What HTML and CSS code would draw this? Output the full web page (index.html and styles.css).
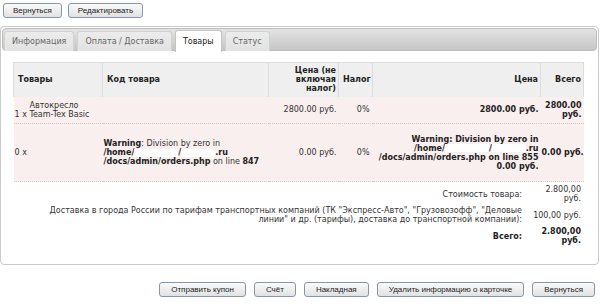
FILE: index.html
```html
<html>
<head>
  <title>Заказ</title>
  <link rel="stylesheet" href="styles.css">
</head>
<body>
<div class="topbar">
  <button class="btn">Вернуться</button>
  <button class="btn">Редактировать</button>
</div>

<div class="panel">
  <ul class="tabs">
    <li class="tab">Информация</li>
    <li class="tab">Оплата / Доставка</li>
    <li class="tab active">Товары</li>
    <li class="tab">Статус</li>
  </ul>

  <div class="content">
    <table class="items">
      <colgroup>
        <col class="w-name"><col class="w-code"><col class="w-net"><col class="w-tax"><col class="w-price"><col class="w-total">
      </colgroup>
      <thead>
        <tr>
          <th>Товары</th>
          <th>Код товара</th>
          <th class="num">Цена (не включая налог)</th>
          <th>Налог</th>
          <th class="num">Цена</th>
          <th class="num">Всего</th>
        </tr>
      </thead>
      <tbody>
        <tr class="row-short">
          <td class="prod"><div class="prod-title">Автокресло</div>1 x Team-Tex Basic</td>
          <td></td>
          <td class="num">2800.00 руб.</td>
          <td class="num tax">0%</td>
          <td class="num"><b>2800.00 руб.</b></td>
          <td class="num"><b>2800.00 руб.</b></td>
        </tr>
        <tr class="row-tall">
          <td>0 x</td>
          <td class="warn"><b>Warning</b>: Division by zero in<br><b class="nw">/home/<span class="mask m1"></span>/<span class="mask m2"></span>.ru</b><br><b>/docs/admin/orders.php</b> on line <b>847</b></td>
          <td class="num">0.00 руб.</td>
          <td class="num tax">0%</td>
          <td class="num warn"><b>Warning: Division by zero in<br><span class="nw">/home/<span class="mask m1"></span>/<span class="mask m2"></span>.ru</span><br>/docs/admin/orders.php on line 855<br>0.00 руб.</b></td>
          <td class="num"><b class="nw">0.00 руб.</b></td>
        </tr>
      </tbody>
    </table>

    <table class="totals">
      <tr>
        <td class="label">Стоимость товара:</td>
        <td class="value">2.800,00 руб.</td>
      </tr>
      <tr>
        <td class="label">Доставка в города России по тарифам транспортных компаний (ТК "Экспресс-Авто", "Грузовозофф", "Деловые<br>линии" и др. (тарифы), доставка до транспортной компании):</td>
        <td class="value">100,00 руб.</td>
      </tr>
      <tr class="grand">
        <td class="label"><b>Всего:</b></td>
        <td class="value"><b>2.800,00 руб.</b></td>
      </tr>
    </table>
  </div>
</div>

<div class="actions">
  <button class="btn">Отправить купон</button>
  <button class="btn">Счёт</button>
  <button class="btn">Накладная</button>
  <button class="btn">Удалить информацию о карточке</button>
  <button class="btn">Вернуться</button>
</div>
</body>
</html>
```

FILE: styles.css
```css
body {
  margin: 0;
  background: #fff;
  color: #333;
  font-family: "DejaVu Sans", Verdana, sans-serif;
  font-size: 8px;
  line-height: 9px;
}

table {
  font-size: 8px;
  line-height: 9px;
}

.btn {
  height: 15px;
  padding: 0 9px;
  border: 1px solid #8597b0;
  border-radius: 3px;
  background: linear-gradient(#fbfbfb, #e1e1e1);
  color: #222;
  font-family: Tahoma, "Liberation Sans", sans-serif;
  font-size: 8px;
  line-height: 13px;
}

.topbar {
  display: flex;
  gap: 6px;
  padding: 3px 0 0 3px;
}

.panel {
  margin-top: 8px;
  width: 595px;
  height: 235px;
  padding: 1px;
  border: 1px solid #cacaca;
  border-radius: 4px;
}

/* tabs */
.tabs {
  display: flex;
  align-items: flex-end;
  gap: 3px;
  height: 21px;
  margin: 0;
  padding: 0 1px;
  list-style: none;
  border: 1px solid #bdbdbd;
  border-radius: 4px;
  background: linear-gradient(#e3e3e3, #c6c6c6);
}

.tab {
  height: 19px;
  margin-bottom: -1px;
  padding: 0 7px;
  border: 1px solid #d2d2d2;
  border-bottom: none;
  border-radius: 3px 3px 0 0;
  background: linear-gradient(#ececec, #e2e2e2);
  color: #666;
  line-height: 19px;
}

.tab.active {
  height: 21px;
  margin-bottom: -2px;
  background: #fff;
  border-color: #c4c4c4;
  color: #222;
  line-height: 21px;
}

.content {
  padding: 11px 0 0 11px;
}

/* items table */
.items, .totals {
  width: 570px;
  border-collapse: collapse;
  table-layout: fixed;
}

.w-name { width: 89px; }
.w-code { width: 166px; }
.w-net { width: 70px; }
.w-tax { width: 34px; }
.w-price { width: 168px; }
.w-total { width: 43px; }

.items th {
  height: 34px;
  padding: 0 2px 0 4px;
  border: 1px solid #dcdcdc;
  border-bottom: none;
  background: #efefef;
  color: #222;
  text-align: left;
  vertical-align: middle;
}

.items td {
  padding: 0 2px 0 1px;
  border-bottom: 1px dotted #d9c9c9;
  background: #f9efef;
  vertical-align: middle;
}

.items .num { text-align: right; }
.items .tax { padding-right: 3px; }
.items b { color: #222; }

.row-short td { height: 27px; }
.row-tall td { height: 58px; }

.prod-title { padding-left: 15px; }
.warn { line-height: 9px; }
.nw { white-space: nowrap; }

.mask {
  display: inline-block;
  height: 8px;
  background: #fff;
  vertical-align: middle;
}

.m1 { width: 44px; }
.m2 { width: 34px; }

/* totals */
.totals td {
  padding: 3px 0 0;
  vertical-align: middle;
}

.totals .label {
  padding-right: 7px;
  text-align: right;
}

.totals .value {
  width: 52px;
  padding-right: 2px;
  text-align: right;
}

.totals b { color: #222; }

.actions {
  display: flex;
  justify-content: flex-end;
  gap: 8px;
  padding: 17px 5px 0 0;
}

.actions .btn {
  padding: 0 11px;
}
```
